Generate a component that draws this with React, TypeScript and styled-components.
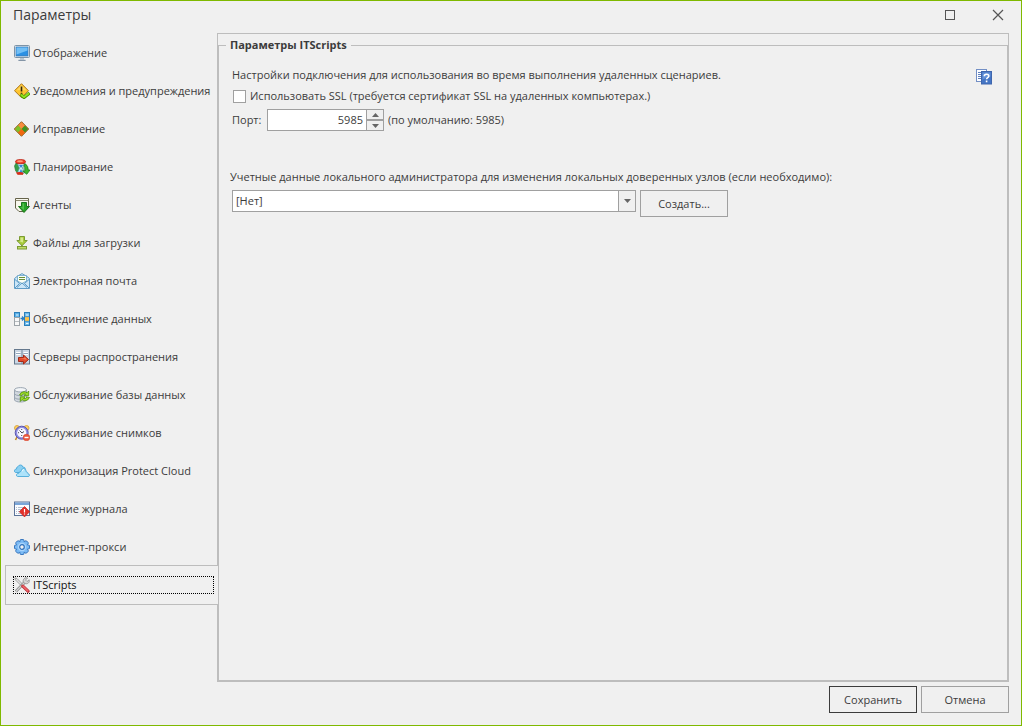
import React, { useState } from "react";
import styled, { createGlobalStyle, css } from "styled-components";

const GlobalStyle = createGlobalStyle`
  * { box-sizing: border-box; }
  body { margin: 0; background: #f0f0f0; }
  body, button, input, select {
    font-family: "Open Sans", "Noto Sans", sans-serif;
    font-size: 11px;
    line-height: 16px;
    color: #3c3c3c;
  }
`;

const Dialog = styled.div`
  display: flex;
  flex-direction: column;
  min-height: 100vh;
  background: #f0f0f0;
  border: 1px solid #7fb900;
  padding: 0 12px 12px 4px;
`;

const TitleBar = styled.header`
  display: flex;
  align-items: center;
  justify-content: space-between;
  height: 32px;
  padding: 0 3px 4px 8px;
`;

const Title = styled.h1`
  margin: 0;
  font-size: 14px;
  font-weight: 400;
  line-height: 20px;
`;

const WindowButtons = styled.div`
  display: flex;
  gap: 32px;
`;

const WindowButton = styled.button`
  display: flex;
  padding: 0;
  border: 0;
  background: none;
`;

const Body = styled.div`
  display: flex;
  flex: 1;
`;

const NavList = styled.ul`
  flex: 0 0 212px;
  margin: 0;
  padding: 0;
  list-style: none;
`;

const NavItem = styled.li<{ $active: boolean }>`
  display: flex;
  align-items: center;
  height: 40px;
  margin: 0 -1px -2px 0;
  padding: 0 4px 0 7px;
  border: 1px solid transparent;
  border-right: 0;
  ${(p) =>
    p.$active &&
    css`
      position: relative;
      background: #f0f0f0;
      border-color: #bdbdbd;
    `}
`;

const NavLink = styled.a<{ $active: boolean }>`
  display: flex;
  flex: 1;
  align-items: center;
  gap: 3px;
  height: 18px;
  border: 1px dotted ${(p) => (p.$active ? "#000" : "transparent")};
  color: ${(p) => (p.$active ? "#111" : "#3c3c3c")};
  text-decoration: none;
  white-space: nowrap;
  outline: none;
`;

const Icon = styled.svg.attrs({ viewBox: "0 0 16 16", "aria-hidden": true })`
  flex: none;
  width: 16px;
  height: 16px;
`;

const Panel = styled.main`
  display: flex;
  flex: 1;
  flex-direction: column;
  min-width: 0;
  padding-top: 1px;
  border: 1px solid #bdbdbd;
`;

const Group = styled.fieldset`
  flex: 1;
  min-width: 0;
  margin: 0;
  padding: 0 15px 12px 11px;
  border: 1px solid #bdbdbd;
`;

const Legend = styled.legend`
  margin-left: -4px;
  padding: 0 4px;
  font-weight: 700;
  line-height: 20px;
`;

const Intro = styled.div`
  display: flex;
  align-items: flex-start;
  justify-content: space-between;
  padding: 12px 0 0 2px;
`;

const Text = styled.p`
  margin: 0;
`;

const HelpButton = styled.button`
  display: flex;
  padding: 2px 0 0;
  border: 0;
  background: none;
`;

const Settings = styled.div`
  display: flex;
  flex-direction: column;
  gap: 5px;
  margin-top: 3px;
`;

const Row = styled.div`
  display: flex;
  align-items: center;
  gap: 4px;
  padding-left: 2px;
`;

const PortLabel = styled.label`
  min-width: 31px;
`;

const CheckBox = styled.input`
  appearance: none;
  width: 13px;
  height: 13px;
  margin: 0 0 0 1px;
  border: 1px solid #a0a0a0;
  background: #fff;
  &:checked {
    background: #555;
    box-shadow: inset 0 0 0 2px #fff;
  }
`;

const Spinner = styled.div`
  display: flex;
  width: 117px;
  height: 22px;
  border: 1px solid #a0a0a0;
  background: #fff;
`;

const PortInput = styled.input`
  flex: 1;
  min-width: 0;
  padding: 0 3px;
  border: 0;
  background: none;
  text-align: right;
  outline: none;
  appearance: textfield;
  &::-webkit-inner-spin-button {
    appearance: none;
  }
`;

const SpinnerButtons = styled.div`
  display: flex;
  flex-direction: column;
  width: 17px;
  border-left: 1px solid #a0a0a0;
`;

const SpinnerButton = styled.button`
  display: flex;
  flex: 1;
  align-items: center;
  justify-content: center;
  padding: 0;
  border: 0;
  background: #f0f0f0;
  & + & {
    border-top: 2px solid #a0a0a0;
  }
`;

const Credentials = styled.div`
  margin-top: 38px;
`;

const CredentialsRow = styled(Row)`
  align-items: flex-start;
  margin-top: 5px;
`;

const SelectBox = styled.div`
  display: grid;
  grid-template-columns: 1fr 17px;
  flex: 0 1 404px;
  height: 22px;
  border: 1px solid #a0a0a0;
  background: #fff;
`;

const Select = styled.select`
  grid-area: 1 / 1 / 2 / 3;
  appearance: none;
  min-width: 0;
  padding: 0 20px 0 3px;
  border: 0;
  background: none;
  outline: none;
`;

const SelectArrow = styled.span`
  display: flex;
  grid-area: 1 / 2;
  align-items: center;
  justify-content: center;
  border-left: 1px solid #a0a0a0;
  background: #f0f0f0;
  pointer-events: none;
`;

const Button = styled.button<{ $primary?: boolean }>`
  width: 88px;
  height: 27px;
  padding: 0;
  border: 1px solid ${(p) => (p.$primary ? "#3c3c3c" : "#a0a0a0")};
  background: #f0f0f0;
`;

const Footer = styled.footer`
  display: flex;
  justify-content: flex-end;
  gap: 4px;
  padding-top: 4px;
`;

const Triangle = ({ up = false }: { up?: boolean }) => (
  <svg width="7" height="4" viewBox="0 0 7 4" aria-hidden="true">
    <path d={up ? "M0 4 3.5 0 7 4z" : "M0 0h7L3.5 4z"} fill="#666" />
  </svg>
);

const DisplayIcon = () => (
  <Icon>
    <rect x=".5" y=".5" width="15" height="12" rx="1" fill="#dbe6ee" stroke="#7d93a6" />
    <rect x="2" y="2" width="12" height="9" fill="#2b90e3" stroke="#3d74ab" strokeWidth=".6" />
    <path d="M2.500 2.500h11v3l-11 4z" fill="#72bff5" />
    <path d="M6 13h4v1.500h1.500V16h-7v-1.500H6z" fill="#b9c6d2" />
    <path d="M4.500 15.500h7" stroke="#8495a6" />
  </Icon>
);

const AlertIcon = () => (
  <Icon>
    <path d="M7.500.7 14.500 7.700 7.500 14.700.5 7.700z" fill="#ffc52e" stroke="#ad7a20" />
    <path d="M7.500 2.200 12.500 7.200H2.500z" fill="#ffe074" opacity=".7" />
    <path d="M7.500 3.500v5M7.500 9.800v1.700" stroke="#332608" strokeWidth="1.600" />
    <path d="m6.500 11.500 3.500 3 5.500-4.500" fill="none" stroke="#4c9200" strokeWidth="3.200" />
    <path d="m7 11.700 3 2.500 5-4" fill="none" stroke="#91e31e" strokeWidth="1.800" />
  </Icon>
);

const PatchIcon = () => (
  <Icon>
    <path d="M7.500.7 14.700 8 7.500 15.300.3 8z" fill="#e77919" stroke="#8d6229" />
    <path d="M7.500 1.200 10.900 4.600 7.500 8 4.100 4.600z" fill="#f88c3e" />
    <path d="M4.100 4.600 7.500 8 4.100 11.400.9 8z" fill="#7cc22b" />
    <path d="M10.900 4.600 14.100 8 10.900 11.400 7.500 8z" fill="#3d9422" />
    <path d="M7.500 8 10.900 11.400 7.500 14.800 4.100 11.400z" fill="#f0680f" />
  </Icon>
);

const ScheduleIcon = () => (
  <Icon>
    <path d="M2 4 .5 7l1 4.500L4 15h5V4z" fill="#35a04a" stroke="#247429" strokeWidth=".6" />
    <path d="M3.500 4.500h7L8.500 9l2 5h-7l2-5z" fill="#c9eefa" stroke="#6c9ebb" strokeWidth=".7" />
    <path d="M5 6h4L7 9z" fill="#2b82d5" />
    <path d="m7 10 2 4H5z" fill="#338fd8" />
    <ellipse cx="6.500" cy="2.700" rx="5" ry="2.100" fill="#f0432a" stroke="#b91c0c" strokeWidth=".8" />
    <ellipse cx="6" cy="2.300" rx="3" ry="1" fill="#ff9b7a" />
    <path d="M2 13.500Q6 12.500 9.500 13.800L9 15.700H3.500z" fill="#dc2b16" />
    <path d="M11 4.500q3.500 2.500 3.300 6.500H16l-3.200 4.300L8.500 12h2.300q.2-4-1-6z" fill="#3cb52c" stroke="#127519" strokeWidth=".7" />
  </Icon>
);

const AgentIcon = () => (
  <Icon>
    <path d="M1.500 1.500h13v9L10 14.500H5L1.500 11z" fill="#f7f7ed" stroke="#66634b" />
    <path d="M1.500 3.500h13" stroke="#8d8a70" />
    <path d="M7.500 5.500h5v4h3L10 15.500 4.500 9.500h3z" fill="#28a426" stroke="#1c771c" />
    <path d="M8.500 6.500h1.500V13L6.500 10.200h2z" fill="#75d668" opacity=".6" />
  </Icon>
);

const DownloadIcon = () => (
  <Icon>
    <path d="M5.500 1.500h5v4h2.700L8 10.700 2.800 5.500h2.700z" fill="#a9cd3b" stroke="#7b9a33" />
    <path d="M6.500 2.500H9v5L5 6.300h1.500z" fill="#e2efa3" opacity=".8" />
    <path d="M7.500 10h1v2h-1z" fill="#6c8a25" />
    <rect x="3.500" y="11.500" width="9" height="2.500" fill="#c0dc67" stroke="#7b9a33" />
  </Icon>
);

const MailIcon = () => (
  <Icon>
    <path d="M.5 5.500 3 3.500 8 .6l5 2.900 2.500 2v10H.5z" fill="#cce6f7" stroke="#609cc6" />
    <path d="M3.500 2.500h9V8L8 10.500 3.500 8z" fill="#f9fdf5" stroke="#69a3c7" strokeWidth=".8" />
    <path d="M5 4.500h6M5 6.500h6" stroke="#69903a" />
    <path d="m1 6.500 4.500 4L1 15M15 6.500l-4.500 4L15 15M3 14.500 8 10l5 4.500" fill="none" stroke="#5d9bc7" />
  </Icon>
);

const MergeIcon = () => (
  <Icon>
    <rect x=".5" y="1.500" width="5" height="5" fill="#5cb1e8" stroke="#2c7fba" />
    <path d="M2 4h2.500" stroke="#e7f6ff" />
    <rect x=".5" y="6.500" width="5" height="8" fill="#f8f8f8" stroke="#9da4a9" />
    <path d="M1 10.500h4" stroke="#b8bdc0" />
    <path d="M6.500 7.500h3M8 5.500l2 2-2 2" fill="none" stroke="#287dc4" strokeWidth="1.300" />
    <rect x="10.500" y="1.500" width="5" height="13" fill="#6ebaec" stroke="#2c7fba" />
    <path d="M12 4h2.500M12 12.500h2.500" stroke="#e7f6ff" />
    <path d="M11 6h4v4h-4z" fill="#ffc24a" />
    <path d="M11 5.700h4M11 10.300h4" stroke="#3f83af" strokeWidth=".7" />
  </Icon>
);

const ServerIcon = () => (
  <Icon>
    <rect x=".5" y=".5" width="15" height="14.500" fill="#cbd7e4" stroke="#65788d" />
    <path d="M8 1v14" stroke="#75899d" />
    <path d="M2 3.500h4.500M2 5.500h4.500M9.500 3.500H14M9.500 5.500H14" stroke="#fff" />
    <path d="M2 4.500h4.500M9.500 4.500H14" stroke="#91a5bc" />
    <path d="M4.500 8.500h5V6l5 4.500-5 4.500v-2.500h-5z" fill="#e34b2c" stroke="#a32a17" />
    <path d="M5.500 9.500h5V8.300l2.300 2.200z" fill="#ff8b66" />
  </Icon>
);

const DatabaseIcon = () => (
  <Icon>
    <path d="M.5 3v10c1 2.700 11 2.700 12 0V3z" fill="#d2d8df" stroke="#9aa5b1" />
    <ellipse cx="6.500" cy="2.800" rx="6" ry="2.200" fill="#f3f6f8" stroke="#9aa5b1" />
    <path d="M.5 7c2 2 7 2 9 1M.5 10.500c2 2 5 2 7 1" fill="none" stroke="#98a4b1" />
    <path d="M5.500 8q1.500-3.300 4.500-3.300 1.700 0 3 1.100L14.700 4v4.700H10L11.500 7Q9 6.200 7.800 8.500z" fill="#9ede27" stroke="#4c8e0d" strokeWidth=".8" />
    <path d="M15.500 10.500q-1.500 3.300-4.500 3.300-1.700 0-3-1.100L6.300 14.500V9.800H11l-1.500 1.700q2.500.8 3.700-1.500z" fill="#9ede27" stroke="#4c8e0d" strokeWidth=".8" />
  </Icon>
);

const SnapshotIcon = () => (
  <Icon>
    <path d="m3 12-1.500 3M12 12l1.500 3" stroke="#c28c29" strokeWidth="1.600" />
    <circle cx="3" cy="3" r="2.500" fill="#ffd15d" stroke="#dbac4c" />
    <circle cx="12.500" cy="3" r="2.500" fill="#ffd15d" stroke="#dbac4c" />
    <circle cx="7.700" cy="7.700" r="6.500" fill="#8f8de0" stroke="#5a56b0" />
    <circle cx="7.700" cy="7.700" r="4.600" fill="#f7f7ff" />
    <path d="M5.500 5.500 8 8l2-1.500M7.700 4v1M7.700 11v-1M4 7.700h1" fill="none" stroke="#4a4a5a" />
    <circle cx="12.500" cy="12.500" r="3.300" fill="#eb593f" stroke="#d9472f" strokeWidth=".6" />
    <path d="M10.500 12.500h4" stroke="#fff" strokeWidth="1.400" />
  </Icon>
);

const CloudIcon = () => (
  <Icon>
    <path d="M1.500 9.500Q0 9 .5 7.200 1 6 2.500 6 2.200 4 4 3.700 4.500 2 6.500 2t2.300 2q2.500 0 2.500 2 .2 3-1.500 3.500z" fill="#8bd0f2" stroke="#4aa8da" strokeWidth=".9" />
    <path d="M3.500 13.500q-1.300-.3-1-1.800.3-1.400 2.300-1.400Q5 8.500 7 8.500q.2-3 2.700-3T12.300 9q1.700 0 1.700 1.800 1.700.2 1.500 1.700-.2 1-1.500 1z" fill="#aee3fa" stroke="#4ca9d8" strokeWidth=".9" />
    <path d="M8 8.500q.3-2 2-2" fill="none" stroke="#effbff" />
  </Icon>
);

const LogIcon = () => (
  <Icon>
    <rect x=".5" y="1" width="15" height="13.500" fill="#fafcff" stroke="#5b7399" />
    <path d="M1 1.500h14V4H1z" fill="#79a5d8" />
    <path d="M2 6.500h1M2 8.500h1M2 10.500h1M2 12.500h1M4 6.500h8M4 8.500h5M4 10.500h3M4 12.500h3" stroke="#b4c0d0" />
    <path d="m10.500 5.500 5.200 5.200-5.200 5.200-5.200-5.200z" fill="#e2302a" stroke="#c02220" strokeWidth=".7" />
    <path d="M10.500 8v3.500M10.500 12.500v1" stroke="#fff" strokeWidth="1.200" />
  </Icon>
);

const GearIcon = () => (
  <Icon>
    {[0, 45, 90, 135, 180, 225, 270, 315].map((angle) => (
      <rect key={angle} x="6" y=".5" width="4" height="4" rx="1" fill="#7bbaf4" stroke="#2b6db9" strokeWidth=".9" transform={`rotate(${angle} 8 8)`} />
    ))}
    <circle cx="8" cy="8" r="5.800" fill="#7bbaf4" />
    <circle cx="8" cy="8" r="4.200" fill="#a9d4fb" />
    <circle cx="8" cy="8" r="2.300" fill="#f0f0f0" stroke="#2f72bd" strokeWidth="1.200" />
  </Icon>
);

const ToolsIcon = () => (
  <Icon>
    <path d="M.8.800 3 1.500l6 6-1.500 1.500-6-6z" fill="#dedede" stroke="#888" strokeWidth=".7" />
    <path d="m1.800 14.500 8.700-9" stroke="#858585" strokeWidth="2.800" />
    <path d="m1.800 14.500 8.700-9" stroke="#d2d2d2" strokeWidth="1.400" />
    <path d="M13.500 1 11.500 3l1.500 1.500L15.200 2.800C16 5.500 13.500 7.500 11 6.500L9.200 5C8.500 2.500 11-.2 13.500 1z" fill="#d5d5d5" stroke="#858585" strokeWidth=".7" />
    <path d="m8.800 9.200 5.200 5" stroke="#b9343a" strokeWidth="3.200" strokeLinecap="round" />
    <path d="m9 9.200 4.800 4.600" stroke="#f0646a" strokeWidth="1.600" strokeLinecap="round" />
  </Icon>
);

const HelpIcon = () => (
  <Icon>
    <rect x=".5" y=".5" width="10" height="12" fill="#fcfdff" stroke="#738fc5" />
    <path d="M2 3.500h5M2 5.500h3M2 7.500h3M2 9.500h3" stroke="#5e7fbd" />
    <rect x="5.500" y="2.500" width="10" height="12.500" fill="#4475c5" stroke="#3f66ad" />
    <path d="M6.500 3.500h8v4l-8 3z" fill="#79a4e2" opacity=".6" />
    <path d="M8.300 7.200c0-2.700 4.500-2.500 4.500-.2 0 1.600-2.200 1.600-2.200 3.300M10.600 11.600v1.600" fill="none" stroke="#fff" strokeWidth="1.600" />
  </Icon>
);

const sections = [
  { label: "Отображение", Glyph: DisplayIcon },
  { label: "Уведомления и предупреждения", Glyph: AlertIcon },
  { label: "Исправление", Glyph: PatchIcon },
  { label: "Планирование", Glyph: ScheduleIcon },
  { label: "Агенты", Glyph: AgentIcon },
  { label: "Файлы для загрузки", Glyph: DownloadIcon },
  { label: "Электронная почта", Glyph: MailIcon },
  { label: "Объединение данных", Glyph: MergeIcon },
  { label: "Серверы распространения", Glyph: ServerIcon },
  { label: "Обслуживание базы данных", Glyph: DatabaseIcon },
  { label: "Обслуживание снимков", Glyph: SnapshotIcon },
  { label: "Синхронизация Protect Cloud", Glyph: CloudIcon },
  { label: "Ведение журнала", Glyph: LogIcon },
  { label: "Интернет-прокси", Glyph: GearIcon },
  { label: "ITScripts", Glyph: ToolsIcon },
];

export default function App() {
  const [active, setActive] = useState("ITScripts");
  const [port, setPort] = useState(5985);

  return (
    <Dialog>
      <GlobalStyle />
      <TitleBar>
        <Title>Параметры</Title>
        <WindowButtons>
          <WindowButton aria-label="Развернуть">
            <Icon>
              <rect x="3.500" y="3.500" width="9" height="9" fill="none" stroke="#555" />
            </Icon>
          </WindowButton>
          <WindowButton aria-label="Закрыть">
            <Icon>
              <path d="m3 3 10 10M13 3 3 13" stroke="#555" strokeWidth="1.200" />
            </Icon>
          </WindowButton>
        </WindowButtons>
      </TitleBar>
      <Body>
        <NavList>
          {sections.map(({ label, Glyph }) => (
            <NavItem key={label} $active={label === active}>
              <NavLink href="#" $active={label === active} onClick={() => setActive(label)}>
                <Glyph />
                {label}
              </NavLink>
            </NavItem>
          ))}
        </NavList>
        <Panel>
          <Group>
            <Legend>Параметры ITScripts</Legend>
            <Intro>
              <Text>Настройки подключения для использования во время выполнения удаленных сценариев.</Text>
              <HelpButton aria-label="Справка">
                <HelpIcon />
              </HelpButton>
            </Intro>
            <Settings>
              <Row>
                <CheckBox type="checkbox" id="ssl" />
                <label htmlFor="ssl">Использовать SSL (требуется сертификат SSL на удаленных компьютерах.)</label>
              </Row>
              <Row>
                <PortLabel htmlFor="port">Порт:</PortLabel>
                <Spinner>
                  <PortInput id="port" type="number" value={port} onChange={(e) => setPort(Number(e.target.value))} />
                  <SpinnerButtons>
                    <SpinnerButton aria-label="Увеличить" onClick={() => setPort(port + 1)}>
                      <Triangle up />
                    </SpinnerButton>
                    <SpinnerButton aria-label="Уменьшить" onClick={() => setPort(port - 1)}>
                      <Triangle />
                    </SpinnerButton>
                  </SpinnerButtons>
                </Spinner>
                <Text>(по умолчанию: 5985)</Text>
              </Row>
            </Settings>
            <Credentials>
              <label htmlFor="credentials">
                Учетные данные локального администратора для изменения локальных доверенных узлов (если необходимо):
              </label>
              <CredentialsRow>
                <SelectBox>
                  <Select id="credentials">
                    <option>[Нет]</option>
                  </Select>
                  <SelectArrow>
                    <Triangle />
                  </SelectArrow>
                </SelectBox>
                <Button>Создать...</Button>
              </CredentialsRow>
            </Credentials>
          </Group>
        </Panel>
      </Body>
      <Footer>
        <Button $primary>Сохранить</Button>
        <Button>Отмена</Button>
      </Footer>
    </Dialog>
  );
}
